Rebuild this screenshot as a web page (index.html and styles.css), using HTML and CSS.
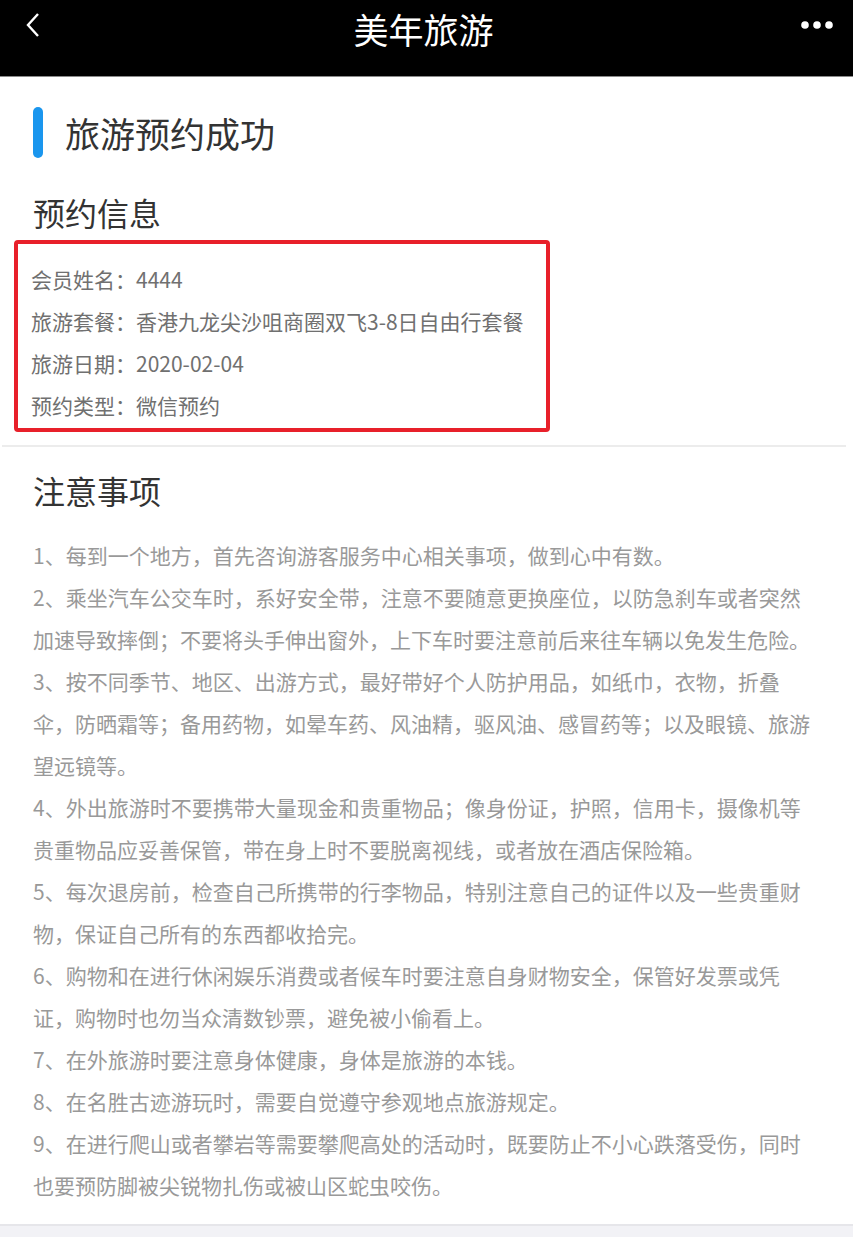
FILE: index.html
```html
<!DOCTYPE html>
<html lang="zh-CN">
<head>
  <meta charset="UTF-8">
  <meta name="viewport" content="width=device-width, initial-scale=1.0">
  <title>美年旅游</title>
  <link rel="stylesheet" href="styles.css">
</head>
<body>
  <div class="topbar">
    <svg class="back" width="16" height="26" viewBox="0 0 16 26">
      <polyline points="13,2 3,13 13,24" fill="none" stroke="#fff" stroke-width="2.4"/>
    </svg>
    <div class="topbar-title">美年旅游</div>
    <svg class="more" width="34" height="10" viewBox="0 0 34 10">
      <circle cx="5" cy="5" r="3.8" fill="#fff"/>
      <circle cx="17" cy="5" r="3.8" fill="#fff"/>
      <circle cx="29" cy="5" r="3.8" fill="#fff"/>
    </svg>
  </div>

  <div class="page-title">
    <span class="title-bar"></span>
    <h1>旅游预约成功</h1>
  </div>

  <div class="section">
    <h3>预约信息</h3>
    <div class="info-box">
      <p>会员姓名：4444</p>
      <p>旅游套餐：香港九龙尖沙咀商圈双飞3-8日自由行套餐</p>
      <p>旅游日期：2020-02-04</p>
      <p>预约类型：微信预约</p>
    </div>
  </div>

  <div class="divider"></div>

  <div class="section notes">
    <h3>注意事项</h3>
    <p>1、每到一个地方，首先咨询游客服务中心相关事项，做到心中有数。</p>
    <p>2、乘坐汽车公交车时，系好安全带，注意不要随意更换座位，以防急刹车或者突然加速导致摔倒；不要将头手伸出窗外，上下车时要注意前后来往车辆以免发生危险。</p>
    <p>3、按不同季节、地区、出游方式，最好带好个人防护用品，如纸巾，衣物，折叠伞，防晒霜等；备用药物，如晕车药、风油精，驱风油、感冒药等；以及眼镜、旅游望远镜等。</p>
    <p>4、外出旅游时不要携带大量现金和贵重物品；像身份证，护照，信用卡，摄像机等贵重物品应妥善保管，带在身上时不要脱离视线，或者放在酒店保险箱。</p>
    <p>5、每次退房前，检查自己所携带的行李物品，特别注意自己的证件以及一些贵重财物，保证自己所有的东西都收拾完。</p>
    <p>6、购物和在进行休闲娱乐消费或者候车时要注意自身财物安全，保管好发票或凭证，购物时也勿当众清数钞票，避免被小偷看上。</p>
    <p>7、在外旅游时要注意身体健康，身体是旅游的本钱。</p>
    <p>8、在名胜古迹游玩时，需要自觉遵守参观地点旅游规定。</p>
    <p>9、在进行爬山或者攀岩等需要攀爬高处的活动时，既要防止不小心跌落受伤，同时也要预防脚被尖锐物扎伤或被山区蛇虫咬伤。</p>
  </div>

  <div class="footer"></div>
</body>
</html>
```

FILE: styles.css
```css
html {
  overflow: hidden;
}

body {
  margin: 0;
  font-family: "Noto Sans CJK SC", "Noto Sans", sans-serif;
  background-color: #fff;
  color: #333;
}

.topbar {
  height: 76px;
  background-color: #000;
  border-bottom: 1px solid #8a8a8a;
  display: grid;
  grid-template-columns: 1fr auto 1fr;
  align-items: start;
  padding: 0 19px 0 24px;
}

.back {
  margin-top: 12px;
  margin-left: 1px;
}

.more {
  margin-top: 20px;
  justify-self: end;
}

.topbar-title {
  color: #fff;
  font-size: 35px;
  line-height: 58px;
  margin-right: 11px;
}

.page-title {
  display: flex;
  align-items: center;
  margin: 30px 0 0 33px;
}

.title-bar {
  width: 10px;
  height: 51px;
  border-radius: 5px;
  background-color: #1a96ee;
}

h1 {
  margin: 0 0 0 22px;
  font-size: 35px;
  font-weight: normal;
  line-height: 51px;
}

.section {
  padding: 0 33px;
}

h3 {
  margin: 0;
  font-size: 32px;
  font-weight: normal;
  line-height: 44px;
}

.section h3 {
  margin-top: 32px;
}

.info-box {
  margin: 6px 0 0 -19px;
  width: 506px;
  border: 4px solid #e8202a;
  border-radius: 4px;
  padding: 14px 9px 2px 13px;
}

.info-box p {
  margin: 0;
  font-size: 21px;
  line-height: 42px;
  color: #707070;
  white-space: nowrap;
}

.divider {
  height: 2px;
  background-color: #ececec;
  margin: 13px 7px 0 2px;
}

.notes {
  padding: 0 38px 0 33px;
}

.notes h3 {
  margin-top: 21px;
  margin-bottom: 22px;
}

.notes p {
  margin: 0;
  font-size: 21px;
  line-height: 42px;
  color: #999;
}

.footer {
  margin-top: 18px;
  border-top: 2px solid #e6e6ea;
  height: 11px;
  background-color: #f2f2f6;
}
```
